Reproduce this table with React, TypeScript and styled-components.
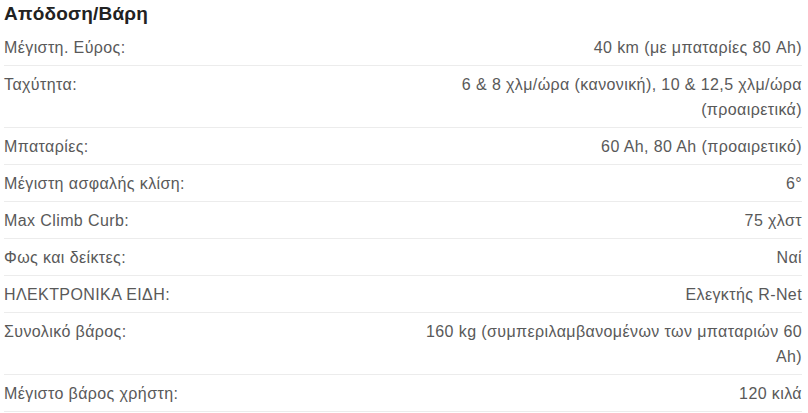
import styled, { createGlobalStyle } from 'styled-components';

const GlobalStyle = createGlobalStyle`
	body {
		margin: 0;
		background: #ffffff;
		font-family: 'Liberation Sans', Arial, sans-serif;
	}
`;

const specs: [string, string][] = [
	['Μέγιστη. Εύρος:', '40 km (με μπαταρίες 80 Ah)'],
	['Ταχύτητα:', '6 & 8 χλμ/ώρα (κανονική), 10 & 12,5 χλμ/ώρα (προαιρετικά)'],
	['Μπαταρίες:', '60 Ah, 80 Ah (προαιρετικό)'],
	['Μέγιστη ασφαλής κλίση:', '6°'],
	['Max Climb Curb:', '75 χλστ'],
	['Φως και δείκτες:', 'Ναί'],
	['ΗΛΕΚΤΡΟΝΙΚΑ ΕΙΔΗ:', 'Ελεγκτής R-Net'],
	['Συνολικό βάρος:', '160 kg (συμπεριλαμβανομένων των μπαταριών 60 Ah)'],
	['Μέγιστο βάρος χρήστη:', '120 κιλά'],
];

const App = () => {
	return (
		<>
			<GlobalStyle />
			<Wrapper>
				<Title>Απόδοση/Βάρη</Title>
				<SpecList>
					{specs.map(([label, value]) => (
						<Row key={label}>
							<Label>{label}</Label>
							<Value>{value}</Value>
						</Row>
					))}
				</SpecList>
			</Wrapper>
		</>
	);
};

const Wrapper = styled.section`
	padding: 0 6px 0 4px;
`;

const Title = styled.h3`
	margin: 0;
	height: 29px;
	display: flex;
	align-items: center;
	font-size: 19px;
	font-weight: 700;
	letter-spacing: 0.2px;
	color: #222222;
	padding-bottom: 2px;
	box-sizing: border-box;
`;

const SpecList = styled.div`
	display: flex;
	flex-direction: column;
`;

const Row = styled.div`
	display: grid;
	grid-template-columns: 1fr 1fr;
	padding: 6px 0 5px;
	border-bottom: 1px solid #ececec;
	font-size: 16px;
	line-height: 25px;
	letter-spacing: 0.4px;
	color: #595959;
`;

const Label = styled.span``;

const Value = styled.span`
	text-align: right;
`;

export default App;
